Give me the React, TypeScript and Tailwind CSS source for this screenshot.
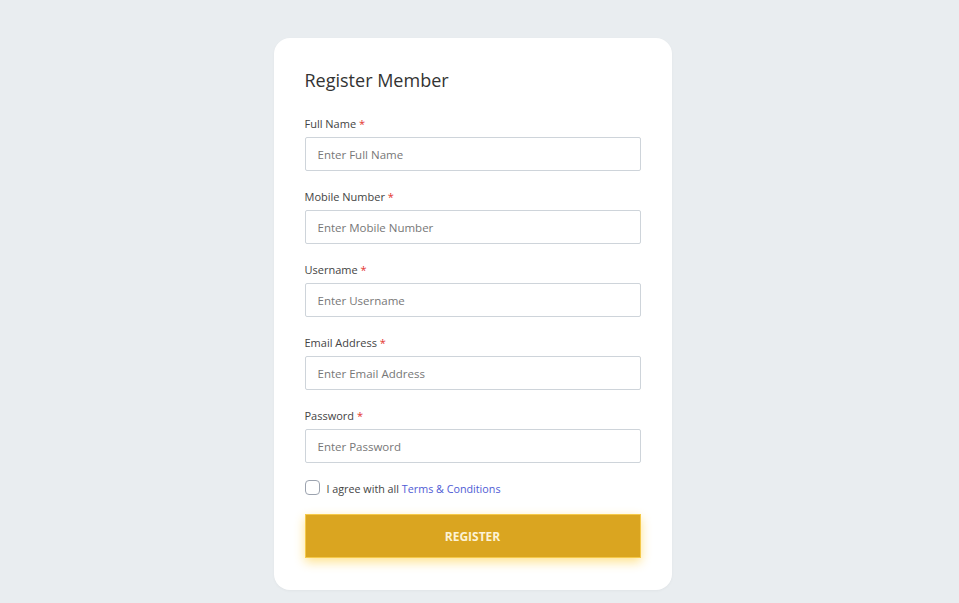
const fields = [
  { label: "Full Name", placeholder: "Enter Full Name", type: "text" },
  { label: "Mobile Number", placeholder: "Enter Mobile Number", type: "text" },
  { label: "Username", placeholder: "Enter Username", type: "text" },
  { label: "Email Address", placeholder: "Enter Email Address", type: "email" },
  { label: "Password", placeholder: "Enter Password", type: "password" },
];

export default function App() {
  return (
    <div className="min-h-screen bg-[#e9edf0] flex justify-center pt-[38px] pr-[14px] font-['Open_Sans',sans-serif]">
      <div className="w-[398px] h-[552px] bg-white rounded-2xl px-[31px] pt-[31px] pb-[32px] shadow-[0_1px_3px_rgba(0,0,0,0.04)]">
        {/* Title */}
        <h2 className="text-[18px] leading-[22px] text-[#333]">Register Member</h2>

        {/* Fields */}
        <div className="mt-[24px] flex flex-col gap-[17px]">
          {fields.map((f) => (
            <div key={f.label}>
              <label className="block text-[11px] leading-[17px] text-[#444] mb-[5px]">
                {f.label} <span className="text-[#e3342f]">*</span>
              </label>
              <input
                type={f.type}
                placeholder={f.placeholder}
                className="block w-full h-[34px] border border-[#ced4da] rounded-[2px] px-3 text-[11.5px] text-[#444] placeholder:text-[#777] outline-none"
              />
            </div>
          ))}
        </div>

        {/* Terms */}
        <div className="mt-[17px] flex items-center h-[15px]">
          <span className="w-[15px] h-[15px] border border-[#9ca3af] rounded-[4px] bg-white shrink-0" />
          <span className="ml-[7px] pt-[3px] text-[10.75px] leading-[15px] text-[#444]">
            I agree with all <a className="text-[#4f5bd5]">Terms &amp; Conditions</a>
          </span>
        </div>

        {/* Submit */}
        <button className="mt-[19px] w-full h-[44px] pt-[2px] bg-[#daa520] border border-[#f5c94a] text-[#fdf3d6] text-[12px] font-bold shadow-[0_4px_10px_rgba(255,193,7,0.45)]">
          REGISTER
        </button>
      </div>
    </div>
  );
}
